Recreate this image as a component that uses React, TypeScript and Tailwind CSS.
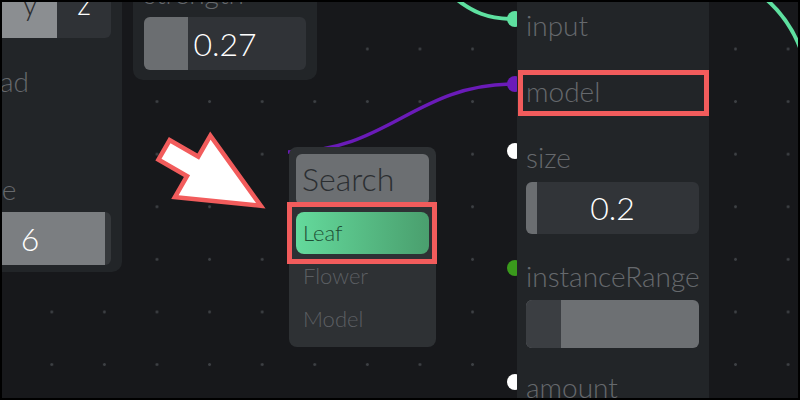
export default function App() {
  return (
    <div className="relative w-[800px] h-[400px] overflow-hidden bg-[#17181b] font-['Lato_Light','Lato',sans-serif] font-light">
      {/* dot grid */}
      <div className="absolute inset-0 bg-[radial-gradient(circle,#3d4044_1.1px,transparent_1.7px)] bg-[length:52.6px_52.6px] bg-[position:25.5px_22.7px]" />

      {/* wires + pins */}
      <svg className="absolute inset-0" width="800" height="400">
        <path d="M 288 152 C 388 152, 415 84, 515 84" stroke="#6a1bb8" strokeWidth="3.5" fill="none" />
        <path d="M 448 -8 C 472 14, 490 19, 515 19" stroke="#5ee0a0" strokeWidth="4" fill="none" />
        <path d="M 760 -6 C 778 8, 792 26, 801 50" stroke="#5ee0a0" strokeWidth="4" fill="none" />
        <circle cx="515" cy="19" r="8" fill="#5ee0a0" />
        <circle cx="515" cy="84" r="8" fill="#6a1bb8" />
        <circle cx="515" cy="151" r="8" fill="#ffffff" />
        <circle cx="515" cy="268" r="8" fill="#3a9a1c" />
        <circle cx="515" cy="382" r="8" fill="#ffffff" />
      </svg>

      {/* left node */}
      <div className="absolute left-[-62px] top-[-44px] w-[184px] h-[316px] rounded-[10px] bg-[#222528] px-[11px] pt-[12px] flex flex-col">
        <div className="flex h-[70px] rounded-[6px] overflow-hidden text-[31px] leading-none">
          <div className="w-[54px] bg-[#8b8e91] flex items-center justify-center text-[#2d2f32]">x</div>
          <div className="w-[54px] bg-[#8b8e91] flex items-center justify-center text-[#2d2f32]">y</div>
          <div className="flex-1 bg-[#2f3236] flex items-center justify-center text-white">z</div>
        </div>
        <div className="mt-[29px] text-[28px] leading-none text-[#66696d]">spread</div>
        <div className="mt-[80px] text-[28px] leading-none text-[#66696d]">range</div>
        <div className="mt-[9px] relative h-[53px] rounded-[6px] bg-[#35383b] overflow-hidden flex items-center justify-center">
          <div className="absolute left-0 top-0 bottom-0 w-[156px] bg-[#7b7e81]" />
          <span className="relative text-[32px] leading-none text-white">6</span>
        </div>
      </div>

      {/* strength node */}
      <div className="absolute left-[133px] top-[-40px] w-[184px] h-[120px] rounded-[10px] bg-[#222528] px-[11px] pt-[19px] flex flex-col">
        <div className="text-[28px] leading-none text-[#66696d]">strength</div>
        <div className="mt-[10px] relative h-[53px] rounded-[6px] bg-[#303337] overflow-hidden flex items-center justify-center">
          <div className="absolute left-0 top-0 bottom-0 w-[44px] bg-[#6b6e71]" />
          <span className="relative text-[32px] leading-none text-white">0.27</span>
        </div>
      </div>

      {/* search dropdown node */}
      <div className="absolute left-[289px] top-[147px] w-[147px] h-[200px] rounded-[8px] bg-[#2e3134] p-[7px] flex flex-col">
        <div className="h-[51px] rounded-[6px] bg-[#6c6f72] flex items-center px-[6px] text-[32px] leading-none text-[#2b2e31]">Search</div>
        <div className="mt-[7px] h-[43px] rounded-[8px] bg-gradient-to-r from-[#64da9c] to-[#4a9f6e] flex items-center px-[7px] text-[22px] leading-none text-[#1d4f35]">Leaf</div>
        <div className="h-[43px] flex items-center px-[7px] text-[22px] leading-none text-[#5c5f63]">Flower</div>
        <div className="h-[43px] flex items-center px-[7px] text-[22px] leading-none text-[#5c5f63]">Model</div>
      </div>

      {/* right node */}
      <div className="absolute left-[517px] top-[-20px] w-[192px] h-[440px] bg-[#222528] pl-[9px] pr-[10px] pt-[31px] flex flex-col text-[28px] leading-none text-[#66696d]">
        <div>input</div>
        <div className="mt-[38px]">model</div>
        <div className="mt-[38px]">size</div>
        <div className="mt-[11px] relative h-[52px] rounded-[6px] bg-[#313438] overflow-hidden flex items-center justify-center">
          <div className="absolute left-0 top-0 bottom-0 w-[11px] bg-[#6b6e71]" />
          <span className="relative text-[32px] text-white">0.2</span>
        </div>
        <div className="mt-[28px]">instanceRange</div>
        <div className="mt-[10px] h-[48px] rounded-[6px] bg-[#6d7073] overflow-hidden flex">
          <div className="w-[35px] bg-[#3b3e42]" />
        </div>
        <div className="mt-[25px]">amount</div>
      </div>

      {/* annotations */}
      <div className="absolute left-[287px] top-[202px] w-[150px] h-[62px] border-[5px] border-[#f25c5c]" />
      <div className="absolute left-[518px] top-[70px] w-[191px] h-[46px] border-[5px] border-[#f25c5c]" />
      <svg className="absolute inset-0 pointer-events-none" width="800" height="400">
        <polygon
          points="0,-9 33,-9 33,-32 104,0 33,32 33,9 0,9"
          transform="translate(166 151) rotate(30)"
          fill="#ffffff"
          stroke="#f25c5c"
          strokeWidth="9"
          strokeLinejoin="miter"
          paintOrder="stroke"
        />
      </svg>

      {/* frame */}
      <div className="absolute inset-0 border-2 border-black pointer-events-none" />
    </div>
  );
}
